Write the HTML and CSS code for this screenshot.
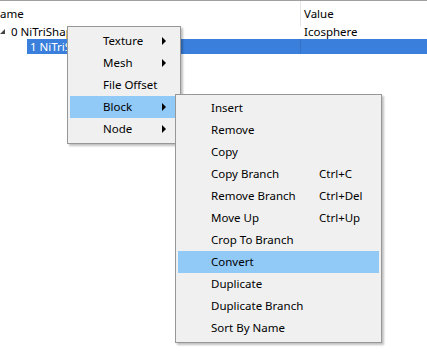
FILE: index.html
```html
<!DOCTYPE html>
<html lang="en">
<head>
    <meta charset="UTF-8">
    <title>Block Menu</title>
    <link rel="stylesheet" href="styles.css">
</head>
<body>

<div class="tree">
    <div class="tree-header">
        <div class="col-name">ame</div>
        <div class="col-value">Value</div>
    </div>
    <div class="tree-row">
        <div class="col-name">
            <svg class="twisty" width="6" height="6" viewBox="0 0 6 6"><polygon points="5,0 5,5 0,5" fill="#444"/></svg>
            <span class="indent-1">0 NiTriShape</span>
        </div>
        <div class="col-value">Icosphere</div>
    </div>
    <div class="tree-row selected">
        <div class="col-name">1 NiTriShape</div>
        <div class="col-value"></div>
    </div>
</div>

<div class="menu menu-main">
    <div class="menu-item">Texture<span class="arrow"></span></div>
    <div class="menu-item">Mesh<span class="arrow"></span></div>
    <div class="menu-item">File Offset</div>
    <div class="menu-item active">Block<span class="arrow"></span></div>
    <div class="menu-item">Node<span class="arrow"></span></div>
</div>

<div class="menu menu-sub">
    <div class="menu-item"><span>Insert</span></div>
    <div class="menu-item"><span>Remove</span></div>
    <div class="menu-item"><span>Copy</span></div>
    <div class="menu-item"><span>Copy Branch</span><span class="key">Ctrl+C</span></div>
    <div class="menu-item"><span>Remove Branch</span><span class="key">Ctrl+Del</span></div>
    <div class="menu-item"><span>Move Up</span><span class="key">Ctrl+Up</span></div>
    <div class="menu-item"><span>Crop To Branch</span></div>
    <div class="menu-item active"><span>Convert</span></div>
    <div class="menu-item"><span>Duplicate</span></div>
    <div class="menu-item"><span>Duplicate Branch</span></div>
    <div class="menu-item"><span>Sort By Name</span></div>
</div>

</body>
</html>
```

FILE: styles.css
```css
body {
    margin: 0;
    background-color: #fff;
    font-family: 'Segoe UI', 'Noto Sans', sans-serif;
    font-size: 11.5px;
    color: #000;
    position: relative;
    height: 360px;
    overflow: hidden;
}

.tree {
    border-top: 1px solid #a0a0a0;
}

.tree-header,
.tree-row {
    display: grid;
    grid-template-columns: 300px 1fr;
}

.tree-header {
    height: 23px;
    line-height: 25px;
}

.tree-header .col-value {
    border-left: 1px solid #e5e5e5;
    padding-left: 3px;
}

.tree-row {
    height: 15px;
    line-height: 15px;
}

.tree-row .col-value {
    padding-left: 4px;
}

.twisty {
    vertical-align: 1px;
}

.indent-1 {
    margin-left: 2px;
}

.tree-row.selected {
    margin-left: 27px;
    grid-template-columns: 273px 1fr;
    background-color: #3a7fdc;
    color: #fff;
}

.tree-row.selected .col-name {
    padding-left: 3px;
}

.tree-row.selected .col-value {
    border-left: 1px solid #3472c4;
}

.menu {
    position: absolute;
    background-color: #f0f0f0;
    border: 1px solid #979797;
    box-shadow: 2px 2px 2px rgba(0, 0, 0, 0.25);
    padding: 3px 2px;
    box-sizing: border-box;
}

.menu-main {
    left: 67px;
    top: 26px;
    width: 114px;
}

.menu-sub {
    left: 175px;
    top: 94px;
    width: 207px;
    padding-top: 2px;
}

.menu-item {
    position: relative;
    height: 22px;
    line-height: 22px;
    padding-left: 33px;
    white-space: nowrap;
}

.menu-sub .menu-item {
    display: grid;
    grid-template-columns: 108px 1fr;
}

.menu-item.active {
    background-color: #91c9f7;
}

.arrow {
    position: absolute;
    right: 12px;
    top: 7px;
    width: 0;
    height: 0;
    border-top: 4px solid transparent;
    border-bottom: 4px solid transparent;
    border-left: 4px solid #000;
}
```
